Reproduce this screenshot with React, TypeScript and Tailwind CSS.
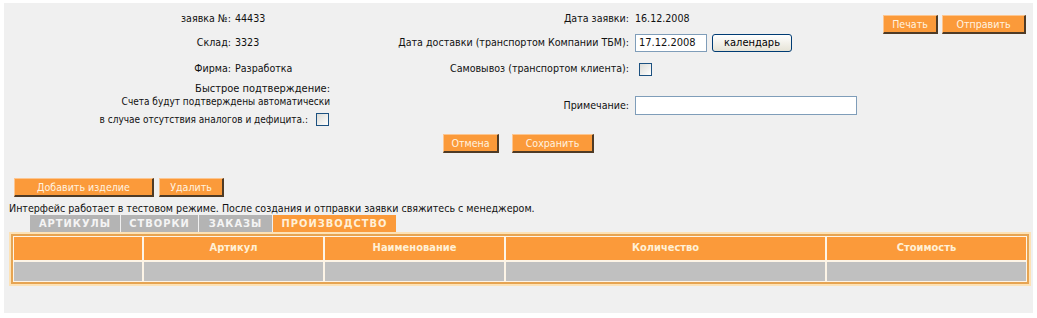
import React from "react";

const Btn = ({ w, children }: { w: string; children: React.ReactNode }) => (
  <div
    className={`${w} h-[19px] flex items-center justify-center bg-[#fb9a3a] text-[#fff3e0] border-t border-l border-t-[#fdc690] border-l-[#fdc690] border-r-2 border-b-2 border-r-[#4f3b26] border-b-[#4f3b26] text-[10.6px] leading-none`}
  >
    {children}
  </div>
);

const Check = ({ cls }: { cls: string }) => (
  <div className={`${cls} w-[13px] h-[13px] border border-[#1c5180] bg-gradient-to-br from-[#dcdcd7] to-white`} />
);

export default function App() {
  const cols = ["", "Артикул", "Наименование", "Количество", "Стоимость"];
  return (
    <div className="bg-white w-[1037px] h-[318px] pt-[3px] pl-[4px] font-['DejaVu_Sans_Condensed','Liberation_Sans',sans-serif] text-[10.6px] text-[#111]">
      <div className="bg-[#f0f0f0] w-[1029px] h-[310px] flex flex-col overflow-hidden">
        <div className="grid grid-cols-[227px_99px_299px_231px_1fr] grid-rows-[24px_24px_28px_45px_30px] mt-[4px]">
          <div className="text-right self-center">заявка №:</div>
          <div className="pl-[4px] self-center">44433</div>
          <div className="text-right self-center">Дата заявки:</div>
          <div className="pl-[6px] self-center">16.12.2008</div>
          <div className="pl-[23px] self-start mt-[8px] flex gap-[4px]">
            <Btn w="w-[55px]">Печать</Btn>
            <Btn w="w-[84px]">Отправить</Btn>
          </div>

          <div className="text-right self-center">Склад:</div>
          <div className="pl-[4px] self-center">3323</div>
          <div className="text-right self-center">Дата доставки (транспортом Компании ТБМ):</div>
          <div className="pl-[6px] self-center flex items-center gap-[5px]">
            <div className="w-[72px] h-[18px] bg-white border border-[#7f9db9] flex items-center pl-[3px] text-[11px]">
              17.12.2008
            </div>
            <div className="w-[80px] h-[18px] rounded-[3px] border border-[#003c74] bg-gradient-to-b from-white to-[#e6e3d6] flex items-center justify-center text-black text-[11px]">
              календарь
            </div>
          </div>
          <div />

          <div className="text-right self-center">Фирма:</div>
          <div className="pl-[4px] self-center">Разработка</div>
          <div className="text-right self-center">Самовывоз (транспортом клиента):</div>
          <div className="pl-[10px] self-center flex">
            <Check cls="" />
          </div>
          <div />

          <div className="col-span-2 self-start text-right flex flex-col items-end">
            <div className="h-[12px] leading-[12px] text-[11px]">Быстрое подтверждение:</div>
            <div className="h-[12px] leading-[12px] text-[10px] mt-[1px]">Счета будут подтверждены автоматически</div>
            <div className="h-[19px] flex items-center gap-[8px] mt-[2px] text-[10px]">
              <span>в случае отсутствия аналогов и дефицита.:</span>
              <Check cls="mr-[1px]" />
            </div>
          </div>
          <div className="text-right self-center">Примечание:</div>
          <div className="pl-[6px] self-center">
            <div className="w-[222px] h-[19px] bg-white border border-[#7f9db9]" />
          </div>
          <div />

          <div className="col-span-5 flex justify-center items-start gap-[13px] pt-[6px]">
            <Btn w="w-[56px]">Отмена</Btn>
            <Btn w="w-[82px]">Сохранить</Btn>
          </div>
        </div>

        <div className="flex gap-[5px] pl-[10px] mt-[20px]">
          <Btn w="w-[140px]">Добавить изделие</Btn>
          <Btn w="w-[65px]">Удалить</Btn>
        </div>

        <div className="pl-[5px] mt-[4px] h-[14px] leading-[14px]">
          Интерфейс работает в тестовом режиме. После создания и отправки заявки свяжитесь с менеджером.
        </div>

        <div className="flex gap-[1px] pl-[26px] h-[17px] font-bold uppercase tracking-[1px] text-[11px] leading-none">
          <div className="w-[90px] bg-[#b4b4b4] text-[#f4f4f4] flex items-center justify-center">Артикулы</div>
          <div className="w-[77px] bg-[#b4b4b4] text-[#f4f4f4] flex items-center justify-center">Створки</div>
          <div className="w-[73px] bg-[#b4b4b4] text-[#f4f4f4] flex items-center justify-center">Заказы</div>
          <div className="w-[123px] bg-[#fb9a3a] text-[#fff0d8] flex items-center justify-center">Производство</div>
        </div>

        <div className="ml-[5px] w-[1022px] border-2 border-[#fde2b6]">
          <div className="border-2 border-[#e6a452]">
            <div className="bg-[#fdf4e6] p-px grid grid-cols-[128px_179px_179px_319px_1fr] grid-rows-[23px_19px] gap-[2px]">
              {cols.map((c, i) => (
                <div key={"h" + i} className="bg-[#fb9a3a] text-[#fff0d6] font-bold text-[11px] flex items-center justify-center">
                  {c}
                </div>
              ))}
              {cols.map((_, i) => (
                <div key={"r" + i} className="bg-[#c0c0c0]" />
              ))}
            </div>
          </div>
        </div>
      </div>
    </div>
  );
}
